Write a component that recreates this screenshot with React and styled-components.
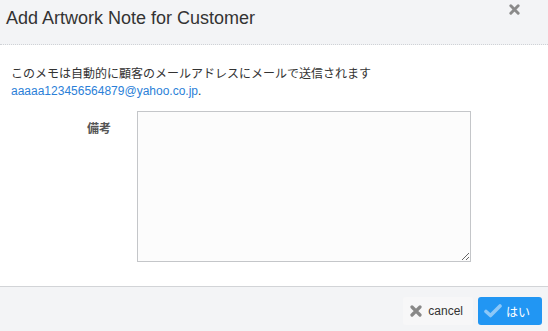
import React from 'react';
import styled, { createGlobalStyle } from 'styled-components';

const GlobalStyle = createGlobalStyle`
  html, body { margin: 0; padding: 0; background: #ffffff; }
  body { font-family: "Liberation Sans", Arial, "Noto Sans CJK JP", sans-serif; color: #333; }
`;

const Modal = styled.div`
  width: 548px;
  height: 331px;
  display: flex;
  flex-direction: column;
  background: #fff;
`;

const Header = styled.div`
  height: 45px;
  background: #f3f4f6;
  border-bottom: 1px dotted #cfd2d6;
  display: flex;
  justify-content: space-between;
  align-items: flex-start;
  padding: 0 0 0 6px;
  box-sizing: border-box;
`;

const Title = styled.h3`
  margin: 8px 0 0;
  font-size: 18px;
  font-weight: normal;
  color: #333;
`;

const Close = styled.button`
  border: none;
  background: none;
  padding: 0;
  margin: 4px 28px 0 0;
  color: #8a8a8a;
  display: flex;
  cursor: pointer;
`;

const Body = styled.div`
  flex: 1;
  padding: 21px 11px 0;
`;

const Notice = styled.p`
  margin: 0;
  font-size: 12px;
  line-height: 17px;
  color: #333;
`;

const Mail = styled.a`
  color: #2b7fd8;
  text-decoration: none;
`;

const FieldRow = styled.div`
  display: grid;
  grid-template-columns: 100px 334px;
  column-gap: 26px;
  margin-top: 11px;
`;

const Label = styled.label`
  text-align: right;
  font-size: 12px;
  font-weight: bold;
  color: #555;
  padding-top: 8px;
`;

const TextArea = styled.textarea`
  width: 334px;
  height: 151px;
  box-sizing: border-box;
  border: 1px solid #c4c6c9;
  background: #fcfcfc;
  resize: both;
  outline: none;
  margin: 0;
  display: block;
`;

const Footer = styled.div`
  height: 45px;
  background: #f3f4f6;
  border-top: 1px solid #d2d4d7;
  display: flex;
  justify-content: flex-end;
  align-items: center;
  gap: 5px;
  padding: 0 6px 0 0;
  box-sizing: border-box;
`;

const Button = styled.button`
  height: 28px;
  border: none;
  border-radius: 3px;
  display: flex;
  align-items: center;
  gap: ${p => (p.$primary ? '4px' : '6px')};
  font-family: inherit;
  font-size: 12px;
  padding: ${p => (p.$primary ? '0 12px 0 6px' : '0 10px 0 7px')};
  background: ${p => (p.$primary ? '#2196f3' : '#f7f7f8')};
  color: ${p => (p.$primary ? '#ffffff' : '#333')};
  margin-top: 4px;
`;

const XIcon = ({ size = 12, color }) => (
  <svg width={size} height={size} viewBox="0 0 12 12">
    <path d="M2 2 L10 10 M10 2 L2 10" stroke={color} strokeWidth="3.2" strokeLinecap="round" />
  </svg>
);

const CheckIcon = () => (
  <svg width="18" height="14" viewBox="0 0 18 14">
    <path d="M2 7.5 L6.5 11.5 L16 2" stroke="#8cc8f8" strokeWidth="3.6" fill="none" strokeLinecap="round" strokeLinejoin="round" />
  </svg>
);

export default function App() {
  return (
    <>
      <GlobalStyle />
      <Modal>
        <Header>
          <Title>Add Artwork Note for Customer</Title>
          <Close aria-label="close"><XIcon size={11} color="#8a8a8a" /></Close>
        </Header>
        <Body>
          <Notice>このメモは自動的に顧客のメールアドレスにメールで送信されます</Notice>
          <Notice><Mail href="#">aaaaa123456564879@yahoo.co.jp</Mail>.</Notice>
          <FieldRow>
            <Label htmlFor="note">備考</Label>
            <TextArea id="note" />
          </FieldRow>
        </Body>
        <Footer>
          <Button><XIcon size={12} color="#888" />cancel</Button>
          <Button $primary><CheckIcon />はい</Button>
        </Footer>
      </Modal>
    </>
  );
}
